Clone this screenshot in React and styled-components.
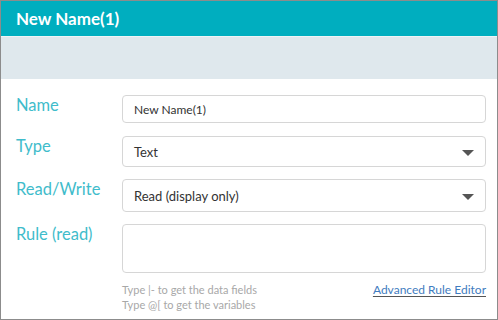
import React from "react";
import styled, { createGlobalStyle } from "styled-components";

const Global = createGlobalStyle`
  html, body { margin: 0; padding: 0; background: #fff; }
  body { font-family: Lato, "Open Sans", sans-serif; }
  * { box-sizing: border-box; }
`;

const Panel = styled.div`
  width: 498px;
  height: 320px;
  border: 1px solid #8c8c8c;
  display: flex;
  flex-direction: column;
  background: #fff;
  overflow: hidden;
`;

const Header = styled.div`
  height: 36px;
  background: #00aebf;
  color: #fff;
  font-size: 17px;
  font-weight: 700;
  display: flex;
  align-items: center;
  padding-left: 15px;
  border-bottom: 1px solid #eef4f6;
`;

const Band = styled.div`
  height: 42px;
  background: #dfe8ed;
`;

const Form = styled.div`
  padding: 16px 11px 0 15px;
  display: flex;
  flex-direction: column;
`;

const Row = styled.div`
  display: grid;
  grid-template-columns: 106px 1fr;
  margin-bottom: ${(p) => p.$gap ?? 12}px;
`;

const Label = styled.div`
  color: #3fbccb;
  font-size: 16.5px;
  font-weight: 400;
  line-height: 20px;
`;

const Field = styled.div`
  position: relative;
  height: ${(p) => p.$h}px;
  border: 1px solid #d6d6d6;
  border-radius: 4px;
  background: #fff;
  display: flex;
  align-items: center;
  padding-left: 11px;
  color: #333;
  font-size: ${(p) => p.$fs ?? 13}px;
`;

const Caret = styled.span`
  position: absolute;
  right: 11px;
  top: 50%;
  margin-top: -2px;
  width: 0;
  height: 0;
  border-left: 6px solid transparent;
  border-right: 6px solid transparent;
  border-top: 6px solid #555;
`;

const Footer = styled.div`
  display: grid;
  grid-template-columns: 106px 1fr auto;
  margin-top: -1px;
`;

const Help = styled.div`
  grid-column: 2;
  color: #a8a8a8;
  font-size: 11px;
  line-height: 15px;
`;

const Link = styled.a`
  grid-column: 3;
  color: #3f7cc0;
  font-size: 12px;
  line-height: 15px;
  text-decoration: underline;
  text-decoration-color: #555;
  text-underline-offset: 2px;
  align-self: start;
`;

export default function App() {
  return (
    <>
      <Global />
      <Panel>
        <Header>New Name(1)</Header>
        <Band />
        <Form>
          <Row $gap={13}>
            <Label>Name</Label>
            <Field $h={28} $fs={12}>New Name(1)</Field>
          </Row>
          <Row $gap={12}>
            <Label>Type</Label>
            <Field $h={31}>
              Text
              <Caret />
            </Field>
          </Row>
          <Row $gap={12}>
            <Label>Read/Write</Label>
            <Field $h={33}>
              Read (display only)
              <Caret />
            </Field>
          </Row>
          <Row $gap={10}>
            <Label>Rule (read)</Label>
            <Field $h={49} />
          </Row>
          <Footer>
            <Help>
              Type |- to get the data fields
              <br />
              Type @[ to get the variables
            </Help>
            <Link href="#">Advanced Rule Editor</Link>
          </Footer>
        </Form>
      </Panel>
    </>
  );
}
